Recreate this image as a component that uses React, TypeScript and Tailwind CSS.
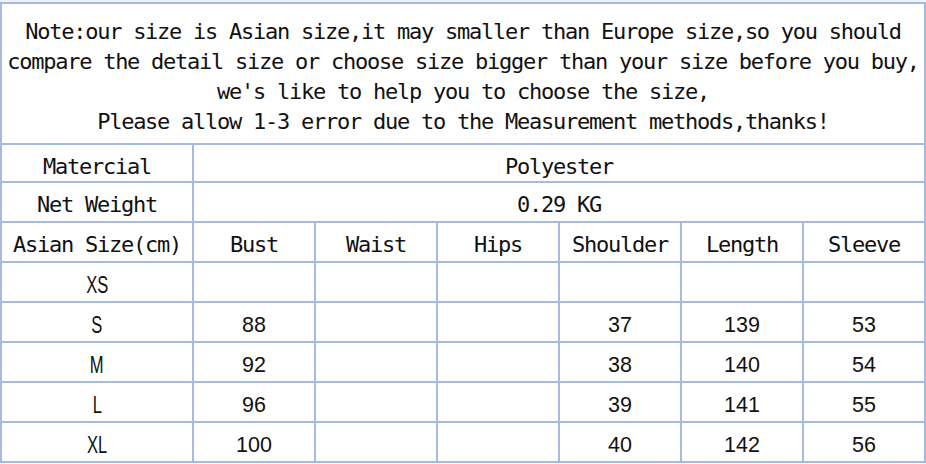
const noteLines = [
  "Note:our size is Asian size,it may smaller than Europe size,so you should",
  "compare the detail size or choose size bigger than your size before you buy,",
  "we's like to help you to choose the size,",
  "Please allow 1-3 error due to the Measurement methods,thanks!",
]

const headers = ["Asian Size(cm)", "Bust", "Waist", "Hips", "Shoulder", "Length", "Sleeve"]

const rows = [
  { size: "XS", values: ["", "", "", "", "", ""] },
  { size: "S", values: ["88", "", "", "37", "139", "53"] },
  { size: "M", values: ["92", "", "", "38", "140", "54"] },
  { size: "L", values: ["96", "", "", "39", "141", "55"] },
  { size: "XL", values: ["100", "", "", "40", "142", "56"] },
]

const mono = "font-['DejaVu_Sans_Mono',monospace] text-[22px] tracking-[-1.25px] text-[#111]"
const sans = "font-['Liberation_Sans',Arial,sans-serif] text-[21.5px] text-[#111]"

export default function App() {
  return (
    <div className="w-[926px] h-[464px] bg-white overflow-hidden">
      <div className="h-[2px] bg-[#eef1f5]" />

      <div className="grid grid-cols-[190px_repeat(6,120px)] grid-rows-[139px_36px_repeat(7,38px)] gap-[2px] p-[2px] bg-[#a4badf]">
        {/* Note */}
        <div className={`col-span-7 bg-white pt-[13px] flex flex-col items-center ${mono}`}>
          {noteLines.map((line) => (
            <div key={line} className="h-[30px] leading-[30px] whitespace-pre">
              {line}
            </div>
          ))}
        </div>

        {/* Material / weight */}
        <div className={`bg-white flex items-center justify-center pt-[6px] ${mono}`}>Matercial</div>
        <div className={`col-span-6 bg-white flex items-center justify-center pt-[6px] ${mono}`}>Polyester</div>
        <div className={`bg-white flex items-center justify-center pt-[5px] ${mono}`}>Net Weight</div>
        <div className={`col-span-6 bg-white flex items-center justify-center pt-[5px] ${mono}`}>0.29 KG</div>

        {/* Header */}
        {headers.map((h) => (
          <div key={h} className={`bg-white flex items-center justify-center pt-[5px] whitespace-pre ${mono}`}>
            {h}
          </div>
        ))}

        {/* Sizes */}
        {rows.map((r) => (
          <>
            <div key={r.size} className="bg-white flex items-center justify-center pt-[7px] font-['Liberation_Sans',Arial,sans-serif] text-[23px] text-[#111]">
              <span className="inline-block scale-x-[0.72]">{r.size}</span>
            </div>
            {r.values.map((v, i) => (
              <div key={r.size + i} className={`bg-white flex items-center justify-center pt-[7px] ${sans}`}>
                {v}
              </div>
            ))}
          </>
        ))}
      </div>
    </div>
  )
}
